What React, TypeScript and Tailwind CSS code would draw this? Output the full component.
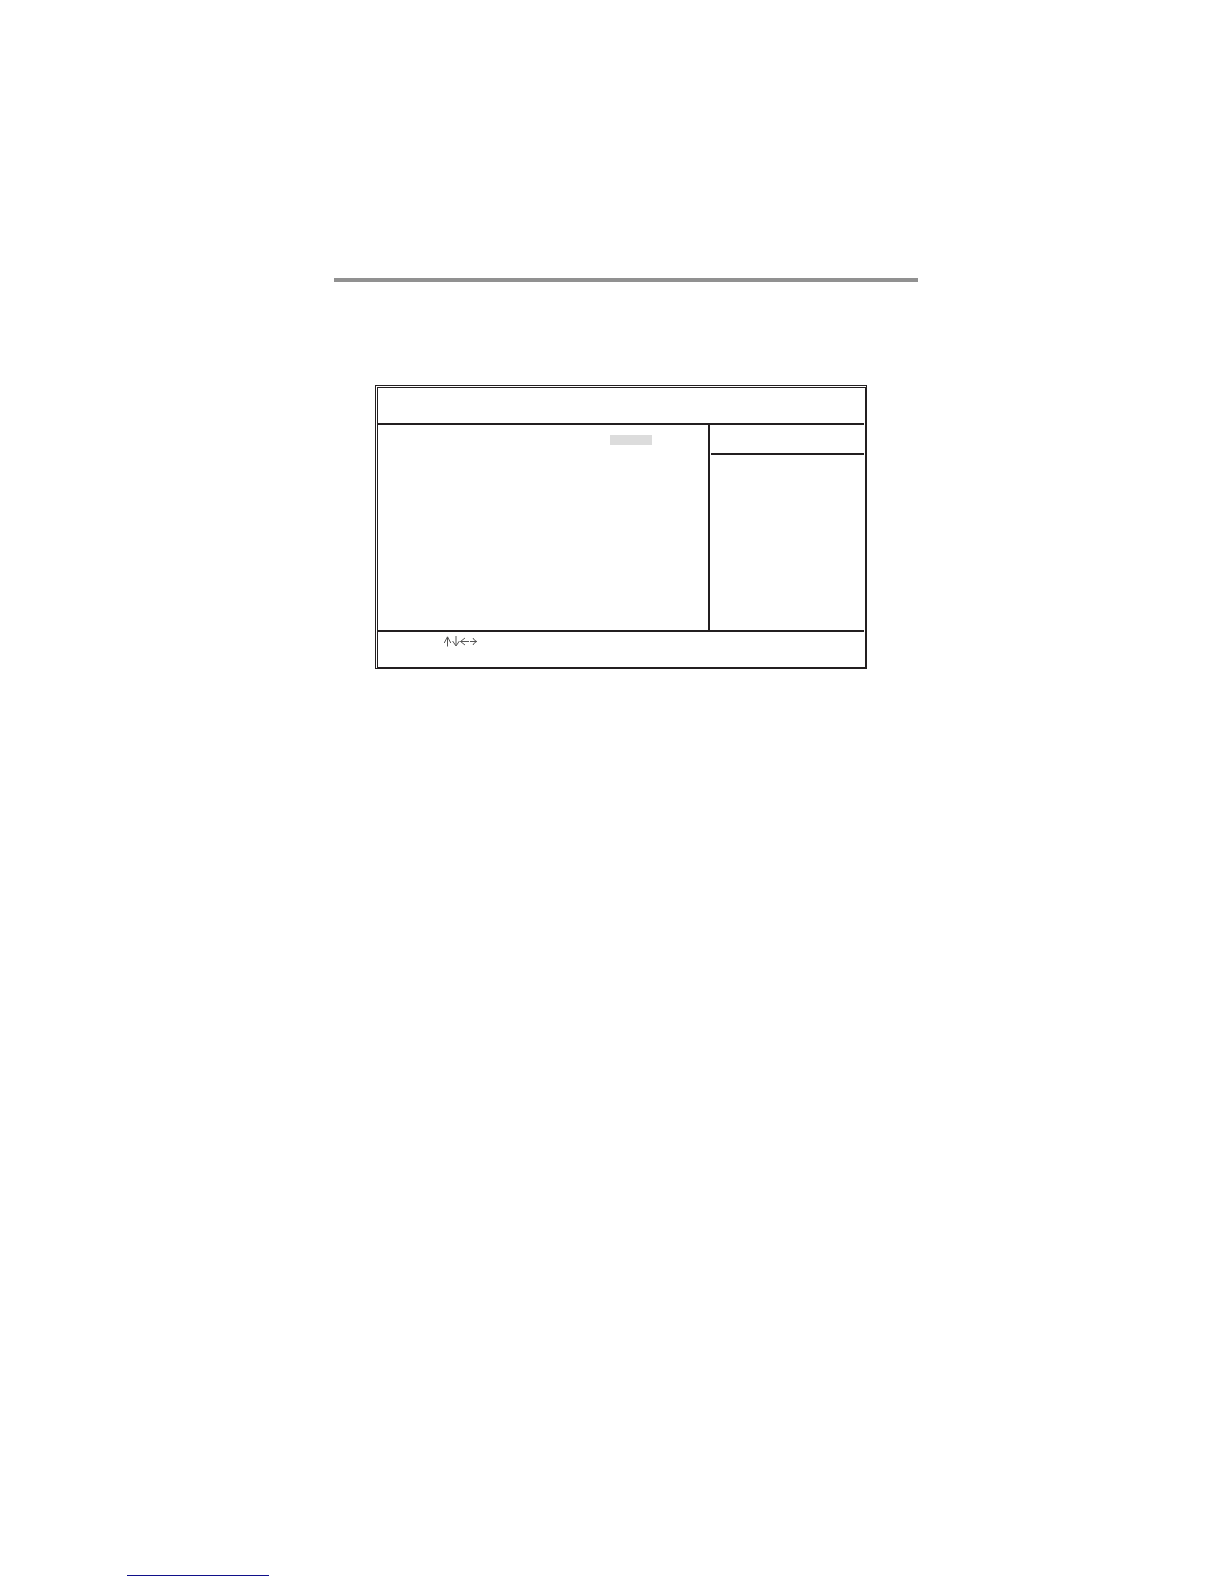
const INK = 'border-[#231f20]';

const arrows = [
  { name: 'Up', d: 'M3.5 10.5V1M0.2 7L3.5 0.8L6.8 7' },
  { name: 'Down', d: 'M12 0V9.5M8.6 5L12 10L15.4 5' },
  { name: 'Left', d: 'M16.5 5.5H25M21 2L16.5 5.5L21 9' },
  { name: 'Right', d: 'M26 5.5H32.7M29 2Q30 4.5 32.7 5.5Q30 6.5 29 9' },
];

const ArrowKeys = () => (
  <svg
    width="33"
    height="11"
    viewBox="0 0 33 11"
    fill="none"
    stroke="#555555"
    strokeWidth="1"
    role="img"
    aria-label="Arrow keys"
  >
    {arrows.map((arrow) => (
      <path key={arrow.name} d={arrow.d} />
    ))}
  </svg>
);

const SetupScreen = () => (
  <section className={`border ${INK} pt-px pl-px`}>
    <div className={`border ${INK} pr-px`}>
      <header className={`h-[37px] border-b-2 ${INK}`} />

      <div className="flex min-h-[205px]">
        <div className={`flex-1 border-r-2 ${INK} pt-[10px] pl-[232px]`}>
          <div className="h-[10px] w-[42px] bg-[#dcdcdc]" />
        </div>
        <aside className="w-[154px] pl-px">
          <div className={`h-[30px] border-b-2 ${INK}`} />
        </aside>
      </div>

      <footer className={`h-[37px] border-t-2 ${INK} pt-1 pl-[66px]`}>
        <ArrowKeys />
      </footer>
    </div>
  </section>
);

export default function App() {
  return (
    <div className="flex min-h-screen flex-col bg-white font-['Liberation_Sans',sans-serif]">
      <main className="flex-1 pt-[278px] pr-[306px] pl-[334px]">
        <hr className="h-1 border-0 bg-[#919191]" />
        <div className="pt-[103px] pr-[51px] pl-[41px]">
          <SetupScreen />
        </div>
      </main>

      <footer className="flex pb-2 pl-[127px]">
        <a
          href="#"
          aria-label="Manual home"
          className="h-4 w-[142px] border-b border-[#10108a]"
        />
      </footer>
    </div>
  );
}
